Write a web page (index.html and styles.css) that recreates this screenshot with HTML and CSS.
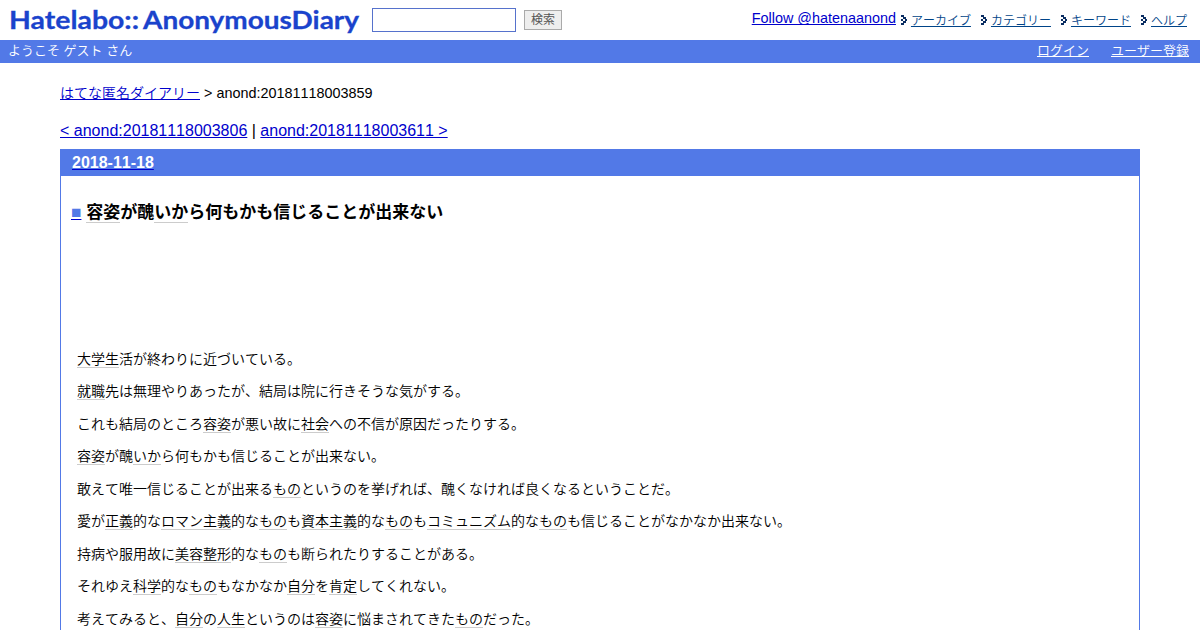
FILE: index.html
```
<!DOCTYPE html>
<html lang="ja">
<head>
<meta charset="utf-8">
<title>容姿が醜いから何もかも信じることが出来ない</title>
<link rel="stylesheet" href="styles.css">
</head>
<body>
<svg class="defs" width="0" height="0"><symbol id="arrow" viewBox="0 0 6 10"><path d="M0 0h3v2H0zM2 2h3v2H2zM4 4h2v2H4zM2 6h3v2H2zM0 8h3v2H0zM0 4h2v2H0z" fill="#0a2e62"/></symbol></svg>
<header class="header">
  <svg class="logo" width="352" height="40" viewBox="0 0 352 40">
    <text x="0" y="28.5" textLength="130" lengthAdjust="spacingAndGlyphs">Hatelabo::</text>
    <text x="134" y="28.5" textLength="216" lengthAdjust="spacingAndGlyphs">AnonymousDiary</text>
  </svg>
  <form class="search"><input class="query" type="text"><button class="submit" type="button">検索</button></form>
  <nav class="links">
    <a class="follow" href="#">Follow @hatenaanond</a>
    <span class="item"><svg class="arrow"><use href="#arrow"/></svg><a href="#">アーカイブ</a></span>
    <span class="item"><svg class="arrow"><use href="#arrow"/></svg><a href="#">カテゴリー</a></span>
    <span class="item"><svg class="arrow"><use href="#arrow"/></svg><a href="#">キーワード</a></span>
    <span class="item"><svg class="arrow"><use href="#arrow"/></svg><a href="#">ヘルプ</a></span>
  </nav>
</header>
<div class="userbar"><span>ようこそ ゲスト さん</span><div class="account"><a href="#">ログイン</a><a href="#">ユーザー登録</a></div></div>
<main class="main">
  <div class="crumbs"><a class="ja" href="#">はてな匿名ダイアリー</a> &gt; anond:20181118003859</div>
  <div class="pager"><a href="#">&lt; anond:20181118003806</a> | <a href="#">anond:20181118003611 &gt;</a></div>
  <article class="day">
    <h2 class="date"><a href="#"><span>2018-11-18</span></a></h2>
    <h3 class="title"><a href="#"><span class="mark">■</span></a> <span class="ja"><a class="kw">容姿</a>が醜<a class="kw">いか</a>ら何もかも信じることが出来ない</span></h3>
    <div class="body">
      <p><a class="kw">大学生</a>活が終わりに近づいている。</p>
      <p><a class="kw">就職</a>先は無理やりあったが、結局は院に行きそうな気がする。</p>
      <p>これも結局のところ<a class="kw">容姿</a>が悪い故に<a class="kw">社会</a>への不信が原因だったりする。</p>
      <p><a class="kw">容姿</a>が醜<a class="kw">いか</a>ら何もかも信じることが出来ない。</p>
      <p>敢えて唯一信じることが出来る<a class="kw">もの</a>というのを挙げれば、醜くなければ良くなるということだ。</p>
      <p>愛が<a class="kw">正義</a>的な<a class="kw">ロマン主義</a>的な<a class="kw">もの</a>も<a class="kw">資本主義</a>的な<a class="kw">もの</a>も<a class="kw">コミュニズム</a>的な<a class="kw">もの</a>も信じることがなかなか出来ない。</p>
      <p>持病や服用故に<a class="kw">美容整形</a>的な<a class="kw">もの</a>も断られたりすることがある。</p>
      <p>それゆえ<a class="kw">科学</a>的な<a class="kw">もの</a>もなかなか<a class="kw">自分</a>を<a class="kw">肯定</a>してくれない。</p>
      <p>考えてみると、<a class="kw">自分</a>の<a class="kw">人生</a>というのは<a class="kw">容姿</a>に悩まされてきた<a class="kw">もの</a>だった。</p>
    </div>
  </article>
</main>
</body>
</html>
```
FILE: styles.css
```
* { box-sizing: border-box; }
html, body { height: 630px; overflow: hidden; }
body { display: flex; flex-direction: column; margin: 0; background: #fff; color: #000; font-family: "Liberation Sans", "Noto Sans CJK JP", sans-serif; font-weight: 350; font-kerning: none; }
a[href] { color: #0000cc; text-decoration: underline; text-underline-offset: 1px; text-decoration-thickness: 1px; text-decoration-skip-ink: none; }
.defs { display: block; height: 0; flex: none; }
.header { display: flex; flex: none; height: 40px; align-items: flex-start; padding-left: 9px; padding-right: 13px; }
.logo { display: block; flex: none; font: 700 25.5px Lato, sans-serif; fill: #1a43cc; stroke: #1a43cc; stroke-width: .3px; }
.search { display: flex; margin: 8px 0 0 11px; gap: 8px; align-items: flex-start; }
.query { width: 144px; height: 24px; border: 1px solid #5672cc; background: #fff; padding: 0; }
.submit { width: 38px; height: 20px; margin-top: 2px; padding: 0; border: 1px solid #aaa; background: #eee; color: #555; font: 12px/16px "Liberation Sans", "Noto Sans CJK JP", sans-serif; }
.links { display: flex; margin-left: auto; height: 40px; line-height: 20px; }
.links .follow { font-size: 14.4px; margin: 8px 5px 0 0; }
.item { display: flex; font-size: 12px; margin: 11px 10px 0 0; }
.item:last-child { margin-right: 0; }
.item a[href] { color: #004488; }
.arrow { width: 6px; height: 10px; margin: 4px 4px 0 0; }
.userbar { display: flex; flex: none; justify-content: space-between; height: 23px; padding: 0 11px 0 8px; background: #5279e7; color: #fff; font-size: 13px; line-height: 22px; }
.account { display: flex; gap: 22px; }
.account a[href] { color: #fff; }
.main { display: flex; flex-direction: column; flex: 1; min-height: 0; padding: 0 60px; }
.crumbs { padding-top: 20px; font-size: 14.4px; line-height: 20px; white-space: nowrap; }
.crumbs .ja { font-size: 14px; }
.pager { margin-top: 18px; font-size: 16px; line-height: 20px; }
.day { margin-top: 8px; flex: 1; min-height: 0; overflow: hidden; border: 1px solid #5279e7; border-bottom: 0; }
.date { margin: 0; padding-left: 11px; height: 26px; background: #5279e7; font-size: 16px; line-height: 25px; }
.date span { color: #fff; }
.title { margin: 23px 0 0 10px; font-size: 17.28px; line-height: 26px; white-space: nowrap; }
.title .ja { font-size: 17px; }
.mark { color: #5279e7; }
.kw { border-bottom: 1px solid #ccc; }
.body { padding: 116.5px 16px 0; font-size: 14px; }
.body p { margin: 0; height: 32.5px; line-height: 32.5px; white-space: nowrap; }
.body p:last-child { height: 27px; }
```
